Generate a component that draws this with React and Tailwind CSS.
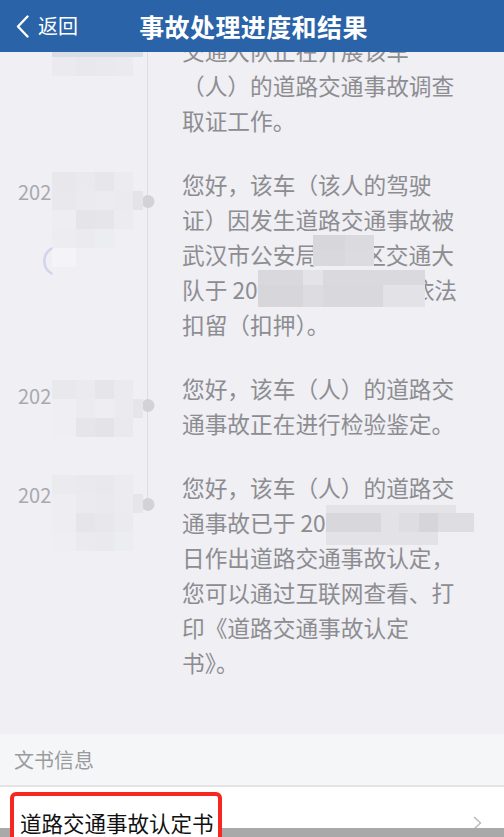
import React from "react";

const BASE = "#efeff4";

// redaction mosaic: rows of [width, colour] cells
function Mosaic({ rows }) {
  return (
    <div className="pointer-events-none flex flex-col">
      {rows.map((row, i) => (
        <div key={i} className="flex" style={{ height: row.h }}>
          {row.cells.map(([w, c], j) => (
            <div key={j} style={{ width: w, backgroundColor: c }} />
          ))}
        </div>
      ))}
    </div>
  );
}

// inline redaction that keeps its place in a line of text
function Redact({ width, rows, left = 0, top = 0 }) {
  return (
    <span className="relative inline-block h-[35px] align-top" style={{ width }}>
      <span className="absolute z-10" style={{ left, top }}>
        <Mosaic rows={rows} />
      </span>
    </span>
  );
}

const W = [24, 19, 19, 19, 10];
const row = (colors) => ({
  h: 19,
  cells: colors.map((c, i) => [W[i], c]),
});

const items = [
  {
    mosaicTop: 19,
    mosaic: [
      { h: 5, cells: [[91, "#d9dde6"]] },
      row(["#ebebef", "#e9e9ed", "#eaeaee", "#ebebef", BASE]),
    ],
    noDot: true,
    noDate: true,
    lines: ["交通大队正在开展该车", "（人）的道路交通事故调查", "取证工作。"],
  },
  {
    mosaicTop: 5,
    mosaic: [
      row(["#e8e8ec", "#eaeaee", "#e7e7eb", "#ececf0", BASE]),
      row(["#e9e9ed", "#ebebef", "#ececf0", "#ebebef", "#e4e4e8"]),
      row(["#eeeef2", "#e4e4e9", "#e6e6ea", "#ececf0", BASE]),
      row(["#ededf1", "#ebebef", "#ecedf1", BASE, BASE]),
      { h: 19, cells: [[24, "#f3f3f8"]] },
    ],
    spinner: true,
    lines: [
      "您好，该车（该人的驾驶",
      "证）因发生道路交通事故被",
      <>
        武汉市公安局
        <Redact
          width={45}
          left={-5}
          top={-2}
          rows={[
            { h: 15, cells: [[32, "#d7d7db"], [29, "#dbdbdf"]] },
            { h: 16, cells: [[32, "#d9d9dd"], [29, "#dcdce0"]] },
          ]}
        />
        区交通大
      </>,
      <>
        队于 20
        <Redact
          width={154}
          top={-2}
          rows={[
            { h: 15, cells: [[45, "#d9d9dd"], [20, "#e4e4e8"], [102, "#dadade"]] },
            {
              h: 22,
              cells: [[45, "#d7d7db"], [20, "#dddde1"], [60, "#d9d9dd"], [42, "#e3e3e7"]],
            },
          ]}
        />
        依法
      </>,
      "扣留（扣押）。",
    ],
  },
  {
    mosaicTop: 9,
    mosaic: [
      row(["#e9e9ed", "#ebebef", "#e6e6ea", "#ebebef", BASE]),
      row(["#efeff3", "#ececf0", "#eeeef2", "#ebebef", "#e6e6ea"]),
      row(["#efeff3", "#e6e6ea", "#e4e4e8", "#eaeaee", BASE]),
    ],
    lines: ["您好，该车（人）的道路交", "通事故正在进行检验鉴定。"],
  },
  {
    mosaicTop: 5,
    mosaic: [
      row(["#ebebef", "#eaeaee", "#e9e9ed", "#ececf0", BASE]),
      row(["#eeeef2", "#ebebef", "#eaeaee", "#ececf0", "#e6e6ea"]),
      row(["#eeeef2", "#e6e6ea", "#e8e8ec", "#ebebef", BASE]),
      row(["#efeff3", "#ebebef", "#eaeaee", "#ecedf1", BASE]),
    ],
    last: true,
    lines: [
      "您好，该车（人）的道路交",
      <>
        通事故已于 20
        <Redact
          width={148}
          rows={[
            { h: 8, cells: [[130, "#e4e4e8"], [18, BASE]] },
            {
              h: 19,
              cells: [
                [55, "#d8d8dc"],
                [18, "#e3e3e7"],
                [20, "#dedee2"],
                [19, "#d6d6da"],
                [36, "#dedee2"],
              ],
            },
            { h: 13, cells: [[112, "#e3e3e7"], [36, BASE]] },
          ]}
        />
      </>,
      "日作出道路交通事故认定，",
      "您可以通过互联网查看、打",
      "印《道路交通事故认定",
      "书》。",
    ],
  },
];

function TimelineItem({ item }) {
  return (
    <div className="flex">
      <div className="relative w-[147px] shrink-0 pl-[18px] pt-[12px] text-[20px] leading-[25px] text-[#a9a9ad]">
        {item.noDate ? null : "202"}
        <div className="absolute left-[52px] z-10" style={{ top: item.mosaicTop }}>
          <Mosaic rows={item.mosaic} />
        </div>
        {item.spinner ? (
          <svg
            className="absolute left-[43px] top-[78px] z-20"
            width="32"
            height="32"
            viewBox="0 0 32 32"
            fill="none"
          >
            <path
              d="M8.5 3.5 A14.5 14.5 0 0 0 8.5 28.5"
              stroke="#d3d3ee"
              strokeWidth="2.5"
              strokeLinecap="round"
            />
          </svg>
        ) : null}
      </div>
      {item.last ? (
        <div className="relative h-[34px] w-px shrink-0 bg-[#dedee2]">
          <span className="absolute left-1/2 top-[28px] h-[13px] w-[13px] -translate-x-1/2 rounded-full bg-[#d3d3d7]" />
        </div>
      ) : (
        <div className="relative w-px shrink-0 bg-[#dedee2]">
          {item.noDot ? null : (
            <span className="absolute left-1/2 top-[28px] h-[13px] w-[13px] -translate-x-1/2 rounded-full bg-[#d3d3d7]" />
          )}
        </div>
      )}
      <div
        className={`min-w-0 flex-1 pl-[34px] text-[22.7px] leading-[35px] text-[#8d8d91] ${
          item.last ? "pb-[54px]" : "pb-[29px]"
        }`}
      >
        {item.lines.map((l, i) => (
          <div key={i} className="whitespace-nowrap">
            {l}
          </div>
        ))}
      </div>
    </div>
  );
}

export default function App() {
  return (
    <div
      className="relative min-h-[837px] overflow-hidden bg-[#efeff4]"
      style={{ fontFamily: '"Noto Sans CJK SC", "Noto Sans", sans-serif' }}
    >
      <header className="relative z-30 grid h-[52px] grid-cols-[1fr_auto_1fr] items-center bg-[#2a63a8] text-white">
        <div className="flex items-center pl-[16px]">
          <svg width="13" height="23" viewBox="0 0 13 23" fill="none">
            <path
              d="M11.5 1.5 L2 11.5 L11.5 21.5"
              stroke="white"
              strokeWidth="2.4"
              strokeLinecap="round"
              strokeLinejoin="round"
            />
          </svg>
          <span className="ml-[9px] text-[20px] leading-none">返回</span>
        </div>
        <h1 className="ml-[3px] text-[25px] font-bold leading-none tracking-[0.4px]">
          事故处理进度和结果
        </h1>
        <div />
      </header>

      <div className="-mt-[19px]">
        {items.map((item, i) => (
          <TimelineItem key={i} item={item} />
        ))}
      </div>

      <div className="flex h-[51px] items-center bg-[#f5f6f8] pl-[14px] text-[20px] text-[#9b9b9f]">
        文书信息
      </div>
      <div className="h-[2px] bg-[#e4e4e7]" />
      <div className="relative flex h-[72px] items-center justify-between bg-white pl-[20px] pr-[22px]">
        <span className="relative z-30 text-[21.5px] text-[#111]">道路交通事故认定书</span>
        <svg width="9" height="14" viewBox="0 0 9 14" fill="none">
          <path d="M1 1 L7.5 7 L1 13" stroke="#b8b8bc" strokeWidth="1.4" />
        </svg>
        <span className="absolute left-[10px] top-[5px] z-20 h-[62px] w-[212px] rounded-[6px] border-4 border-[#f52720] bg-white" />
      </div>

      <div className="fixed bottom-0 left-0 right-0 z-10 h-[9px] bg-[#a9a9a9]" />
    </div>
  );
}
